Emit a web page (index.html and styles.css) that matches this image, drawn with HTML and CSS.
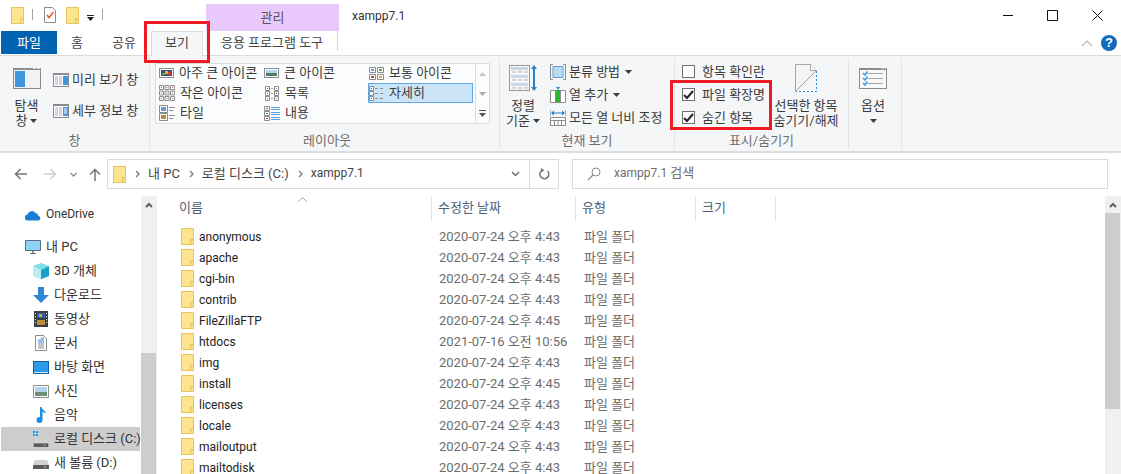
FILE: index.html
```html
<!DOCTYPE html>
<html lang="ko">
  <head>
    <title>xampp7.1</title>
    <link rel="stylesheet" href="styles.css">
  </head>

  <body>
    <svg class="defs" width="0" height="0">
      <symbol id="folder" viewBox="0 0 13 17">
        <path d="M.5.5h12v16H.5z" fill="#fde48f" stroke="#e6c35c"/>
        <path d="M9.5 16.5v-5h3" fill="#fbd871" stroke="#e6c35c"/>
      </symbol>
      <symbol id="chev" viewBox="0 0 6 8">
        <path d="M1 1l3 3-3 3" fill="none" stroke="#7f7f7f" stroke-width="1.4"/>
      </symbol>
      <symbol id="drop" viewBox="0 0 7 4">
        <path d="M0 0h7L3.500 4z" fill="#3c3c3c"/>
      </symbol>
      <symbol id="drive" viewBox="0 0 16 12">
        <path d="M2 3h12l2 5v3H0V8z" fill="#d2d2d2"/>
        <path d="M0 8h16v4H0z" fill="#5c5c5c"/>
        <path d="M11 9.500h2v1h-2z" fill="#7fe08a"/>
      </symbol>
    </svg>

    <div class="titlebar">
      <div class="qat">
        <svg class="ico-folder"><use href="#folder"/></svg>
        <span class="qat-sep"></span>
        <svg class="qat-doc" width="12" height="16" viewBox="0 0 12 16">
          <path d="M.5.500h8l3 3v12H.5z" fill="#fff" stroke="#8c8c8c"/>
          <path d="M3 8l2 2.500L9.500 5" fill="none" stroke="#e0592a" stroke-width="1.500"/>
        </svg>
        <svg class="ico-folder qat-folder"><use href="#folder"/></svg>
        <svg class="qat-drop" width="7" height="6" viewBox="0 0 7 6">
          <path d="M0 0h7v1H0zM0 2h7L3.500 6z" fill="#222"/>
        </svg>
        <span class="qat-sep qat-sep-last"></span>
      </div>
      <div class="manage">관리</div>
      <div class="wintitle latin">xampp7.1</div>
      <div class="winctl">
        <span class="winbtn"><svg width="10" height="10" viewBox="0 0 10 10"><path d="M0 5.500h10" stroke="#111"/></svg></span>
        <span class="winbtn"><svg width="11" height="11" viewBox="0 0 11 11"><path d="M.5.500h10v10H.5z" fill="none" stroke="#111"/></svg></span>
        <span class="winbtn"><svg width="11" height="11" viewBox="0 0 11 11"><path d="M.5.500l10 10M10.500.500l-10 10" stroke="#111"/></svg></span>
      </div>
    </div>

    <div class="tabs">
      <div class="tab tab-file">파일</div>
      <div class="tab tab-home">홈</div>
      <div class="tab tab-share">공유</div>
      <div class="tab tab-view">보기</div>
      <div class="tab tab-tools">응용 프로그램 도구</div>
      <div class="tabs-right">
        <svg width="12" height="7" viewBox="0 0 12 7"><path d="M1 6l5-5 5 5" fill="none" stroke="#b5b5b5" stroke-width="1.200"/></svg>
        <span class="help">?</span>
      </div>
    </div>

    <div class="ribbon">
      <div class="group group-pane">
        <div class="group-body">
          <div class="big big-pane">
            <div class="big-icon">
              <svg width="28" height="21" viewBox="0 0 28 21">
                <path d="M0 0h28v21H0z" fill="#8c8c8c"/>
                <path d="M1 2h26v18H1z" fill="#f2f2f2"/>
                <path d="M2 3h10v16H2z" fill="#3f97e0"/>
                <path d="M24 .500h3M20 .500h3" stroke="#ddd"/>
              </svg>
            </div>
            <div>탐색</div>
            <div>창 <svg class="drop"><use href="#drop"/></svg></div>
          </div>
          <div class="small-col small-pane">
            <div class="small">
              <svg width="16" height="14" viewBox="0 0 16 14">
                <path d="M0 0h16v14H0z" fill="#8c8c8c"/>
                <path d="M1 2h14v11H1z" fill="#fff"/>
                <path d="M2 3h3v9H2zM6 3h3v9H6z" fill="#cfd8e2"/>
                <path d="M10 3h5v9h-5z" fill="#3f97e0"/>
              </svg>
              <span>미리 보기 창</span>
            </div>
            <div class="small">
              <svg width="16" height="14" viewBox="0 0 16 14">
                <path d="M0 0h16v14H0z" fill="#8c8c8c"/>
                <path d="M1 2h14v11H1z" fill="#fff"/>
                <path d="M2 3h3v9H2zM6 3h3v9H6z" fill="#cfd8e2"/>
                <path d="M10 3h5v9h-5z" fill="#3f97e0"/>
                <path d="M11 5h3M11 7h3M11 9h3" stroke="#fff"/>
              </svg>
              <span>세부 정보 창</span>
            </div>
          </div>
        </div>
        <div class="group-label">창</div>
      </div>

      <div class="group group-layout">
        <div class="group-body">
          <div class="gallery">
            <div class="gallery-grid">
              <div class="gitem">
                <svg width="15" height="12" viewBox="0 0 15 12">
                  <path d="M0 1h15v10H0z" fill="#8c8c8c"/><path d="M1 2h13v8H1z" fill="#fff"/>
                  <path d="M2 3h11v6H2z" fill="#3b4f80"/><path d="M6 4h3v3H6z" fill="#e2b32f"/><path d="M9 5h3v3H9z" fill="#c4452e"/><path d="M3 6h3v2H3z" fill="#6fa14b"/>
                </svg>
                <span>아주 큰 아이콘</span>
              </div>
              <div class="gitem">
                <svg width="15" height="12" viewBox="0 0 15 12">
                  <path d="M0 1h15v10H0z" fill="#8c8c8c"/><path d="M1 2h13v8H1z" fill="#fff"/>
                  <path d="M2 3h11v6H2z" fill="#b5d2e8"/><path d="M2 6h11v3H2z" fill="#4f7a62"/>
                </svg>
                <span>큰 아이콘</span>
              </div>
              <div class="gitem">
                <svg width="15" height="13" viewBox="0 0 15 13">
                  <path d="M.5.500h6v5h-6zM8.500.500h6v5h-6zM.5 7.500h6v5h-6zM8.500 7.500h6v5h-6z" fill="#fff" stroke="#8c8c8c"/>
                  <path d="M2 2h3v2H2z" fill="#6d9cc7"/><path d="M10 2h3v2h-3z" fill="#6fa14b"/><path d="M2 9h3v2H2z" fill="#c4452e"/><path d="M10 9h3v2h-3z" fill="#e2b32f"/>
                </svg>
                <span>보통 아이콘</span>
              </div>
              <div class="gitem">
                <svg width="16" height="16" viewBox="0 0 16 16">
                  <path d="M.5.500h4v4h-4zM6 .500h4v4H6zM11.500.500h4v4h-4zM.5 6h4v4h-4zM6 6h4v4H6zM11.500 6h4v4h-4zM.5 11.500h4v4h-4zM6 11.500h4v4H6zM11.500 11.500h4v4h-4z" fill="#fff" stroke="#8c8c8c"/>
                  <path d="M2 2h1v1H2zM13 2h1v1h-1zM7.500 7.500h1v1h-1zM13 13h1v1h-1z" fill="#c4452e"/><path d="M7.500 2h1v1h-1zM2 7.500h1v1H2zM7.500 13h1v1h-1z" fill="#4f7a9f"/><path d="M13 7.500h1v1h-1zM2 13h1v1H2z" fill="#6fa14b"/>
                </svg>
                <span>작은 아이콘</span>
              </div>
              <div class="gitem gitem-list">
                <svg width="15" height="15" viewBox="0 0 15 15">
                  <path d="M.5.500h4v4h-4zM.5 5.500h4v4h-4zM.5 10.500h4v4h-4zM9.500.500h4v4h-4zM9.500 5.500h4v4h-4zM9.500 10.500h4v4h-4z" fill="#fff" stroke="#8c8c8c"/>
                  <path d="M2 2h1v1H2zM11 7h1v1h-1zM2 12h1v1H2z" fill="#c4452e"/><path d="M2 7h1v1H2zM11 2h1v1h-1zM11 12h1v1h-1z" fill="#6d8fb0"/>
                  <path d="M5.500 2.500h3M5.500 7.500h3M5.500 12.500h3" stroke="#b5b5b5"/>
                </svg>
                <span>목록</span>
              </div>
              <div class="gitem gitem-on">
                <svg width="15" height="15" viewBox="0 0 15 15">
                  <path d="M.5.500h4v4h-4zM.5 5.500h4v4h-4zM.5 10.500h4v4h-4z" fill="#fff" stroke="#8c8c8c"/>
                  <path d="M2 2h1v1H2zM2 12h1v1H2z" fill="#c4452e"/>
                  <path d="M6 2.500h3M11 2.500h3M6 7.500h3M11 7.500h3M6 12.500h3M11 12.500h3" stroke="#8c8c8c"/>
                </svg>
                <span>자세히</span>
              </div>
              <div class="gitem">
                <svg width="16" height="16" viewBox="0 0 16 16">
                  <path d="M.5.500h8v7h-8zM.5 8.500h8v7h-8z" fill="#fff" stroke="#8c8c8c"/>
                  <path d="M2 2h5v4H2z" fill="#6d9cc7"/><path d="M2 10h5v4H2z" fill="#b98b3a"/>
                  <path d="M10 2.500h6M10 5.500h4M10 10.500h6M10 13.500h4" stroke="#8c8c8c"/>
                </svg>
                <span>타일</span>
              </div>
              <div class="gitem">
                <svg width="16" height="15" viewBox="0 0 16 15">
                  <path d="M.5.500h5v4h-5zM.5 5.500h5v4h-5zM.5 10.500h5v4h-5z" fill="#fff" stroke="#8c8c8c"/>
                  <path d="M2 2h2v1H2zM2 12h2v1H2z" fill="#c4452e"/><path d="M2 7h2v1H2z" fill="#6d8fb0"/>
                  <path d="M7 1.500h9M7 3.500h9M7 6.500h9M7 8.500h9M7 11.500h9M7 13.500h9" stroke="#5aa0dc"/>
                </svg>
                <span>내용</span>
              </div>
            </div>
            <div class="gallery-scroll">
              <span><svg width="7" height="4" viewBox="0 0 7 4"><path d="M0 4h7L3.500 0z" fill="#c4c4c4"/></svg></span>
              <span><svg width="7" height="4" viewBox="0 0 7 4"><path d="M0 0h7L3.500 4z" fill="#a8a8a8"/></svg></span>
              <span><svg width="7" height="7" viewBox="0 0 7 7"><path d="M0 0h7v1H0zM0 3h7L3.500 7z" fill="#555"/></svg></span>
            </div>
          </div>
        </div>
        <div class="group-label">레이아웃</div>
      </div>

      <div class="group group-current">
        <div class="group-body">
          <div class="big big-sort">
            <div class="big-icon">
              <svg width="28" height="28" viewBox="0 0 28 28">
                <path d="M0 1h21v26H0z" fill="#9a9a9a"/>
                <path d="M1 2h19v24H1z" fill="#f4f6f8"/>
                <path d="M2 3h17v3H2zM2 11h17v3H2zM2 19h17v3H2z" fill="#c9d8e4"/>
                <path d="M3 8h4M9 8h4M15 8h4M3 16h4M9 16h4M15 16h4M3 24h4M9 24h4M15 24h4" stroke="#b5b5b5"/>
                <path d="M25 3v22" stroke="#2f7fc4" stroke-width="2"/>
                <path d="M22 5l3-4 3 4zM22 23l3 4 3-4z" fill="#2f7fc4"/>
              </svg>
            </div>
            <div>정렬</div>
            <div>기준 <svg class="drop"><use href="#drop"/></svg></div>
          </div>
          <div class="small-col small-current">
            <div class="small">
              <svg width="16" height="16" viewBox="0 0 16 16">
                <path d="M3 .500H.5v15H3M13 .500h2.500v15H13" fill="none" stroke="#8c8c8c"/>
                <path d="M3 2.500h10v11H3z" fill="#bcdcf6" stroke="#5aa0dc"/>
              </svg>
              <span>분류 방법</span>
              <svg class="drop"><use href="#drop"/></svg>
            </div>
            <div class="small">
              <svg width="16" height="16" viewBox="0 0 16 16">
                <path d="M.5 3.500h15v12H.5z" fill="#fff" stroke="#8c8c8c"/>
                <path d="M5.500 3.500v12M10.500 3.500v12" stroke="#8c8c8c"/>
                <path d="M6 3h4v12H6z" fill="#2cb52c"/>
                <path d="M6 0h4L8 3z" fill="#2f7fc4"/>
              </svg>
              <span>열 추가</span>
              <svg class="drop"><use href="#drop"/></svg>
            </div>
            <div class="small">
              <svg width="16" height="16" viewBox="0 0 16 16">
                <path d="M0 0v6M16 0v6M2 3h12" stroke="#2f7fc4" fill="none"/>
                <path d="M1 3l3-2.500v5zM15 3l-3-2.500v5z" fill="#2f7fc4"/>
                <path d="M.5 7.500h15v8H.5z" fill="#fff" stroke="#8c8c8c"/>
                <path d="M.5 10.500h15M4.500 10.500v5M8 10.500v5M11.500 10.500v5" stroke="#8c8c8c"/>
              </svg>
              <span>모든 열 너비 조정</span>
            </div>
          </div>
        </div>
        <div class="group-label">현재 보기</div>
      </div>

      <div class="group group-show">
        <div class="group-body">
          <div class="small-col small-show">
            <div class="small"><span class="check"></span><span>항목 확인란</span></div>
            <div class="small"><span class="check check-on">
              <svg width="11" height="11" viewBox="0 0 11 11"><path d="M1 6l3 3 6-7" fill="none" stroke="#222" stroke-width="2"/></svg>
            </span><span>파일 확장명</span></div>
            <div class="small"><span class="check check-on">
              <svg width="11" height="11" viewBox="0 0 11 11"><path d="M1 6l3 3 6-7" fill="none" stroke="#222" stroke-width="2"/></svg>
            </span><span>숨긴 항목</span></div>
          </div>
          <div class="big big-hide">
            <div class="big-icon">
              <svg width="22" height="28" viewBox="0 0 22 28">
                <path d="M.5.500h15l6 6v21H.5z" fill="#f4f5f6"/>
                <path d="M.5 27.500V.5h15l6 6" fill="none" stroke="#a5a5a5"/>
                <path d="M15.500.500v6h6" fill="#fff" stroke="#a5a5a5"/>
                <path d="M21.500 7v20.500H1" fill="none" stroke="#2f8fe6" stroke-dasharray="2 2"/>
                <path d="M.5 27.500l21-21" stroke="#a5a5a5"/>
              </svg>
            </div>
            <div>선택한 항목</div>
            <div>숨기기/해제</div>
          </div>
        </div>
        <div class="group-label">표시/숨기기</div>
      </div>

      <div class="group group-opts">
        <div class="group-body">
          <div class="big big-opts">
            <div class="big-icon">
              <svg width="28" height="21" viewBox="0 0 28 21">
                <path d="M0 0h28v21H0z" fill="#8c8c8c"/>
                <path d="M1 2h26v18H1z" fill="#f8f8f8"/>
                <path d="M22 .500h1M24 .500h1M26 .500h1" stroke="#ddd"/>
                <path d="M9 5.500h15M9 10.500h15M9 15.500h15" stroke="#a5a5a5"/>
                <path d="M4 5l2 2 2.500-3.500M4 10l2 2 2.500-3.500M4 15l2 2 2.500-3.500" fill="none" stroke="#3f97e0" stroke-width="1.500"/>
              </svg>
            </div>
            <div>옵션</div>
            <div><svg class="drop"><use href="#drop"/></svg></div>
          </div>
        </div>
      </div>
    </div>

    <div class="addrbar">
      <div class="nav">
        <svg width="13" height="12" viewBox="0 0 13 12"><path d="M13 6H2M6.500 1L1.500 6l5 5" fill="none" stroke="#757575" stroke-width="1.500"/></svg>
        <svg class="nav-fwd" width="13" height="12" viewBox="0 0 13 12"><path d="M0 6h11M6.500 1l5 5-5 5" fill="none" stroke="#cfcfcf" stroke-width="1.500"/></svg>
        <svg class="nav-down" width="7" height="5" viewBox="0 0 7 5"><path d="M.5 1l3 3 3-3" fill="none" stroke="#8c8c8c" stroke-width="1.300"/></svg>
        <svg class="nav-up" width="12" height="13" viewBox="0 0 12 13"><path d="M6 13V2M1 6.500l5-5 5 5" fill="none" stroke="#757575" stroke-width="1.500"/></svg>
      </div>
      <div class="addr">
        <svg class="ico-folder"><use href="#folder"/></svg>
        <svg class="crumb-chev"><use href="#chev"/></svg>
        <span class="crumb">내 PC</span>
        <svg class="crumb-chev"><use href="#chev"/></svg>
        <span class="crumb">로컬 디스크 (C:)</span>
        <svg class="crumb-chev"><use href="#chev"/></svg>
        <span class="crumb latin">xampp7.1</span>
        <svg class="addr-down" width="9" height="6" viewBox="0 0 9 6"><path d="M1 1l3.500 3.500L8 1" fill="none" stroke="#6d6d6d" stroke-width="1.500"/></svg>
        <span class="addr-refresh">
          <svg width="11" height="12" viewBox="0 0 11 12"><path d="M8.500 3A4.500 4.500 0 1 1 3 2.300" fill="none" stroke="#757575" stroke-width="1.500"/><path d="M2 0l3.500 2.300L2 4.500z" fill="#757575"/></svg>
        </span>
      </div>
      <div class="search">
        <svg width="14" height="14" viewBox="0 0 14 14"><circle cx="9" cy="5" r="4" fill="none" stroke="#8c8c8c"/><path d="M6 8l-5 5" stroke="#8c8c8c" stroke-width="1.200"/></svg>
        <span><span class="latin">xampp7.1</span> 검색</span>
      </div>
    </div>

    <div class="panes">
      <div class="tree">
        <div class="tree-item lvl0">
          <svg width="16" height="11" viewBox="0 0 16 11"><path d="M3 10.500a3 3 0 0 1-.5-6A4.500 4.500 0 0 1 10.500 3a3.500 3.500 0 0 1 3 3 2.300 2.300 0 0 1 0 4.500z" fill="#1a7fd4"/></svg>
          <span class="latin">OneDrive</span>
        </div>
        <div class="tree-item lvl0 tree-gap">
          <svg width="16" height="15" viewBox="0 0 16 15"><path d="M.5.500h15v10H.5z" fill="#8fd2f7" stroke="#5a6f82"/><path d="M5 13h6v1H5z" fill="#5a6f82"/><path d="M7 11h2v2H7z" fill="#8c9aa6"/></svg>
          <span>내 PC</span>
        </div>
        <div class="tree-item">
          <svg width="16" height="16" viewBox="0 0 16 16"><path d="M8 0l8 3v10l-8 3-8-3V3z" fill="#7fdde8"/><path d="M8 7l8-4v10l-8 3z" fill="#1b9fc4"/><path d="M8 7L0 3v10l8 3z" fill="#b8eef2"/></svg>
          <span>3D 개체</span>
        </div>
        <div class="tree-item">
          <svg width="16" height="16" viewBox="0 0 16 16"><path d="M5 0h6v8h5l-8 8-8-8h5z" fill="#2f86d6"/></svg>
          <span>다운로드</span>
        </div>
        <div class="tree-item">
          <svg width="14" height="16" viewBox="0 0 14 16"><path d="M0 0h14v16H0z" fill="#3a3f45"/><path d="M3 2h8v5H3z" fill="#2c5fa8"/><path d="M3 9h8v5H3z" fill="#b98b3a"/><path d="M5 3h3v3H5z" fill="#d9a22f"/><path d="M1 2h1v1H1zM1 5h1v1H1zM1 8h1v1H1zM1 11h1v1H1zM12 2h1v1h-1zM12 5h1v1h-1zM12 8h1v1h-1zM12 11h1v1h-1z" fill="#ddd"/></svg>
          <span>동영상</span>
        </div>
        <div class="tree-item">
          <svg width="12" height="16" viewBox="0 0 12 16"><path d="M.5.500h8l3 3v12H.5z" fill="#fff" stroke="#8c8c8c"/><path d="M6 3h3M3 5h6M3 7h6" stroke="#2f86d6"/><path d="M3 9h6M3 11h6M3 13h6" stroke="#8c8c8c"/></svg>
          <span>문서</span>
        </div>
        <div class="tree-item">
          <svg width="16" height="13" viewBox="0 0 16 13"><path d="M0 0h16v13H0z" fill="#1a5f9e"/><path d="M1 1h14v10H1z" fill="#2a9be8"/><path d="M1 11h14v1H1z" fill="#cde6f8"/></svg>
          <span>바탕 화면</span>
        </div>
        <div class="tree-item">
          <svg width="16" height="13" viewBox="0 0 16 13"><path d="M.5.500h15v12H.5z" fill="#fff" stroke="#8c8c8c"/><path d="M2 2h12v5H2z" fill="#b5d2e8"/><path d="M2 7h12v4H2z" fill="#6f8f72"/></svg>
          <span>사진</span>
        </div>
        <div class="tree-item">
          <svg width="12" height="16" viewBox="0 0 12 16"><path d="M5 0h1.500c0 3 4.500 3.500 4.500 7-1-1.500-2.500-2-3.500-2V13a3 3 0 1 1-2.500-3z" fill="#1a8fe0"/></svg>
          <span>음악</span>
        </div>
        <div class="tree-item tree-on">
          <svg width="16" height="16" viewBox="0 0 16 16">
            <path d="M0 0h2v2H0zM3 0h2v2H3zM0 3h2v2H0zM3 3h2v2H3z" fill="#1a9be8"/>
            <use href="#drive" y="5" width="16" height="11"/>
          </svg>
          <span>로컬 디스크 (C:)</span>
        </div>
        <div class="tree-item">
          <svg width="16" height="12" viewBox="0 0 16 12"><use href="#drive"/></svg>
          <span>새 볼륨 (D:)</span>
        </div>
      </div>
      <div class="vscroll vscroll-tree">
        <div class="sb-up"><svg width="8" height="6" viewBox="0 0 8 6"><path d="M1 5l3-3 3 3" fill="none" stroke="#606060" stroke-width="2"/></svg></div>
        <div class="sb-gap"></div>
        <div class="sb-thumb"></div>
      </div>

      <div class="files">
        <div class="head">
          <div class="col col-name">이름<svg class="sort" width="9" height="5" viewBox="0 0 9 5"><path d="M.5 4.500l4-4 4 4" fill="none" stroke="#a0a0a0"/></svg></div>
          <div class="col">수정한 날짜</div>
          <div class="col">유형</div>
          <div class="col">크기</div>
        </div>
        <div class="rows">
          <div class="row"><div class="name"><svg class="ico-folder"><use href="#folder"/></svg>anonymous</div><div class="dim">2020-07-24 오후 4:43</div><div class="dim">파일 폴더</div></div>
          <div class="row"><div class="name"><svg class="ico-folder"><use href="#folder"/></svg>apache</div><div class="dim">2020-07-24 오후 4:43</div><div class="dim">파일 폴더</div></div>
          <div class="row"><div class="name"><svg class="ico-folder"><use href="#folder"/></svg>cgi-bin</div><div class="dim">2020-07-24 오후 4:45</div><div class="dim">파일 폴더</div></div>
          <div class="row"><div class="name"><svg class="ico-folder"><use href="#folder"/></svg>contrib</div><div class="dim">2020-07-24 오후 4:43</div><div class="dim">파일 폴더</div></div>
          <div class="row"><div class="name"><svg class="ico-folder"><use href="#folder"/></svg>FileZillaFTP</div><div class="dim">2020-07-24 오후 4:45</div><div class="dim">파일 폴더</div></div>
          <div class="row"><div class="name"><svg class="ico-folder"><use href="#folder"/></svg>htdocs</div><div class="dim">2021-07-16 오전 10:56</div><div class="dim">파일 폴더</div></div>
          <div class="row"><div class="name"><svg class="ico-folder"><use href="#folder"/></svg>img</div><div class="dim">2020-07-24 오후 4:43</div><div class="dim">파일 폴더</div></div>
          <div class="row"><div class="name"><svg class="ico-folder"><use href="#folder"/></svg>install</div><div class="dim">2020-07-24 오후 4:45</div><div class="dim">파일 폴더</div></div>
          <div class="row"><div class="name"><svg class="ico-folder"><use href="#folder"/></svg>licenses</div><div class="dim">2020-07-24 오후 4:43</div><div class="dim">파일 폴더</div></div>
          <div class="row"><div class="name"><svg class="ico-folder"><use href="#folder"/></svg>locale</div><div class="dim">2020-07-24 오후 4:43</div><div class="dim">파일 폴더</div></div>
          <div class="row"><div class="name"><svg class="ico-folder"><use href="#folder"/></svg>mailoutput</div><div class="dim">2020-07-24 오후 4:43</div><div class="dim">파일 폴더</div></div>
          <div class="row"><div class="name"><svg class="ico-folder"><use href="#folder"/></svg>mailtodisk</div><div class="dim">2020-07-24 오후 4:43</div><div class="dim">파일 폴더</div></div>
        </div>
      </div>
      <div class="vscroll vscroll-files">
        <div class="sb-up"><svg width="8" height="6" viewBox="0 0 8 6"><path d="M1 5l3-3 3 3" fill="none" stroke="#606060" stroke-width="2"/></svg></div>
        <div class="sb-thumb"></div>
        <div class="sb-gap"></div>
      </div>
    </div>

    <!-- red annotation boxes drawn over the screenshot -->
    <div class="mark mark-tab"></div>
    <div class="mark mark-check"></div>
  </body>
</html>
```

FILE: styles.css
```css
* {
  box-sizing: border-box;
}

html, body {
  height: 100%;
}

body {
  margin: 0;
  background: #fff;
  color: #333;
  font-family: Roboto, "Noto Sans CJK KR", sans-serif;
  font-size: 13px;
  line-height: 15px;
  overflow: hidden;
  position: relative;
}

svg {
  display: block;
  flex: none;
}

.defs {
  position: absolute;
}

.latin {
  font-size: 12px;
}

.ico-folder {
  width: 13px;
  height: 17px;
}

/* title bar */
.titlebar {
  display: flex;
  height: 31px;
}

.qat {
  display: flex;
  align-items: flex-start;
  width: 206px;
  padding: 7px 0 0 11px;
}

.qat-sep {
  width: 1px;
  height: 11px;
  margin: 2px 0 0 8px;
  background: #a5a5a5;
}

.qat-doc {
  margin-left: 11px;
}

.qat-folder {
  margin-left: 10px;
}

.qat-drop {
  margin: 8px 0 0 8px;
}

.qat-sep-last {
  margin-left: 8px;
}

.manage {
  width: 133px;
  margin-top: 4px;
  background: #e9c9fb;
  color: #555;
  text-align: center;
  line-height: 27px;
}

.wintitle {
  padding: 9px 0 0 13px;
  color: #333;
}

.winctl {
  display: flex;
  margin-left: auto;
  padding-right: 1px;
}

.winbtn {
  display: flex;
  justify-content: center;
  width: 45px;
  padding-top: 10px;
}

/* tabs */
.tabs {
  display: flex;
  height: 25px;
  padding-left: 1px;
  border-bottom: 1px solid #dadbdc;
}

.tab {
  text-align: center;
  line-height: 24px;
  color: #444;
}

.tab-file {
  width: 56px;
  height: 23px;
  background: #0063b1;
  color: #fff;
  line-height: 23px;
}

.tab-home {
  width: 40px;
}

.tab-share {
  width: 54px;
}

.tab-view {
  width: 52px;
  height: 25px;
  background: #f5f6f7;
  border: 1px solid #dadbdc;
  border-bottom: none;
  line-height: 22px;
}

.tab-tools {
  width: 132px;
  height: 20px;
  margin-left: 3px;
  border-left: 1px solid #e8e8e8;
  border-right: 1px solid #d5d5d5;
}

.tabs-right {
  display: flex;
  align-items: center;
  gap: 8px;
  height: 24px;
  margin-left: auto;
  padding-right: 4px;
}

.help {
  width: 16px;
  height: 16px;
  border-radius: 50%;
  background: #0f6cbd;
  color: #fff;
  font: bold 13px/16px "Liberation Sans", sans-serif;
  text-align: center;
}

/* ribbon */
.ribbon {
  display: flex;
  height: 97px;
  padding-top: 2px;
  background: #f5f6f7;
  border-bottom: 2px solid #dcdee0;
}

.group {
  display: flex;
  flex-direction: column;
  height: 91px;
  border-right: 1px solid #e1e3e5;
  color: #3c3c3c;
}

.group-body {
  display: flex;
  height: 75px;
}

.group-label {
  color: #6d6d6d;
  text-align: center;
  line-height: 15px;
}

.group-pane {
  width: 150px;
}

.group-layout {
  width: 350px;
  padding-left: 5px;
}

.group-current {
  width: 175px;
}

.group-show {
  width: 174px;
}

.group-opts {
  width: 53px;
}

.big {
  display: flex;
  flex-direction: column;
  align-items: center;
  text-align: center;
}

.big > div {
  display: flex;
  align-items: center;
  gap: 3px;
  height: 15px;
}

.big > .big-icon {
  justify-content: center;
  height: 40px;
}

.drop {
  width: 7px;
  height: 4px;
}

.big-pane {
  width: 53px;
}

.big-sort {
  width: 46px;
}

.big-hide {
  width: 70px;
  white-space: nowrap;
}

.big-opts {
  width: 48px;
}

.small-col {
  display: flex;
  flex-direction: column;
  padding-top: 2px;
}

.small {
  display: flex;
  align-items: center;
  height: 23px;
  gap: 3px;
  white-space: nowrap;
}

.small-pane {
  padding-top: 10px;
  gap: 8px;
}

.small-current {
  padding-left: 4px;
}

.small-current .drop {
  margin-left: 2px;
}

.small-show {
  width: 96px;
  padding-left: 7px;
}

.small-show .small {
  gap: 7px;
}

.check {
  display: flex;
  align-items: center;
  justify-content: center;
  width: 13px;
  height: 13px;
  background: #fff;
  border: 1px solid #707070;
}

/* gallery */
.gallery {
  display: flex;
  width: 335px;
  height: 61px;
  margin-top: 5px;
  background: #fbfcfd;
  border: 1px solid #dcdcdc;
}

.gallery-grid {
  display: grid;
  grid-template-columns: repeat(3, 105px);
  grid-auto-rows: 20px;
  width: 319px;
  padding-left: 2px;
  margin-top: -1px;
}

.gitem {
  display: flex;
  align-items: center;
  gap: 5px;
  padding-left: 1px;
  white-space: nowrap;
}

.gitem span {
  margin-bottom: 2px;
}

.gitem-list {
  padding-left: 2px;
}

.gitem-on {
  background: #cce4f7;
  border: 1px solid #62a8e5;
  padding-left: 0;
}

.gallery-scroll {
  display: flex;
  flex-direction: column;
  flex: 1;
  border-left: 1px solid #dcdcdc;
}

.gallery-scroll span {
  display: flex;
  align-items: center;
  justify-content: center;
  flex: 1;
}

/* address bar */
.addrbar {
  display: flex;
  height: 43px;
  padding: 6px 13px 0 14px;
}

.nav {
  display: flex;
  align-items: center;
  width: 93px;
  height: 30px;
}

.nav-fwd {
  margin-left: 17px;
}

.nav-down {
  margin-left: 13px;
}

.nav-up {
  margin-left: 12px;
}

.addr {
  display: flex;
  align-items: center;
  width: 452px;
  height: 30px;
  padding-left: 5px;
  border: 1px solid #d9d9d9;
  color: #444;
  white-space: nowrap;
}

.crumb-chev {
  width: 6px;
  height: 8px;
  margin: 0 7px 0 9px;
}

.crumb {
  margin-bottom: 2px;
}

.addr-down {
  margin-left: auto;
  margin-right: 9px;
}

.addr-refresh {
  display: flex;
  align-items: center;
  justify-content: center;
  width: 29px;
  height: 28px;
  border-left: 1px solid #d9d9d9;
}

.search {
  display: flex;
  align-items: center;
  gap: 13px;
  width: 536px;
  height: 30px;
  margin-left: 13px;
  padding-left: 14px;
  border: 1px solid #d9d9d9;
  color: #6d6d6d;
}

.search > span {
  margin-bottom: 2px;
}

/* panes */
.panes {
  display: flex;
  height: 279px;
  overflow: hidden;
}

.tree {
  width: 141px;
  padding: 7px 0 0 1px;
  white-space: nowrap;
  overflow: hidden;
  color: #333;
}

.tree-item {
  display: flex;
  align-items: center;
  gap: 5px;
  width: 139px;
  height: 24px;
  padding-left: 32px;
}

.tree-item > svg {
  width: 16px;
}

.tree-item > span {
  margin-bottom: 2px;
}

.lvl0 {
  padding-left: 24px;
}

.tree-gap {
  margin-top: 8px;
}

.tree-on {
  background: #cdcdcd;
}

.vscroll {
  display: flex;
  flex-direction: column;
  flex: none;
  width: 16px;
  background: #f0f0f0;
}

.sb-up {
  display: flex;
  align-items: center;
  justify-content: center;
  height: 17px;
}

.sb-thumb {
  background: #cdcdcd;
}

.vscroll-tree .sb-gap {
  height: 140px;
}

.vscroll-tree .sb-thumb {
  flex: 1;
  margin-right: 1px;
}

.vscroll-files .sb-thumb {
  height: 196px;
  margin-right: 1px;
}

.files {
  flex: 1;
  margin-left: 3px;
  overflow: hidden;
}

.head {
  display: grid;
  grid-template-columns: 272px 144px 120px 80px;
  height: 25px;
  color: #4c607a;
}

.col {
  position: relative;
  padding: 4px 0 0 6px;
  border-right: 1px solid #e5e5e5;
}

.col-name {
  padding-left: 19px;
}

.sort {
  position: absolute;
  top: 1px;
  left: 138px;
}

.rows {
  padding-top: 5px;
}

.row {
  display: grid;
  grid-template-columns: 272px 144px 120px;
  height: 21px;
  align-items: center;
}

.name {
  display: flex;
  align-items: center;
  gap: 5px;
  padding: 2px 0 0 21px;
  font-size: 12px;
  color: #222;
}

.name svg {
  margin-top: -2px;
}

.dim {
  padding-left: 7px;
  color: #6d6d6d;
  white-space: nowrap;
}

.row .dim:last-child {
  padding-left: 8px;
}

.mark {
  position: absolute;
  border: 3px solid #ed1c24;
}

.mark-tab {
  left: 144px;
  top: 21px;
  width: 66px;
  height: 42px;
}

.mark-check {
  left: 670px;
  top: 80px;
  width: 102px;
  height: 50px;
}
```
